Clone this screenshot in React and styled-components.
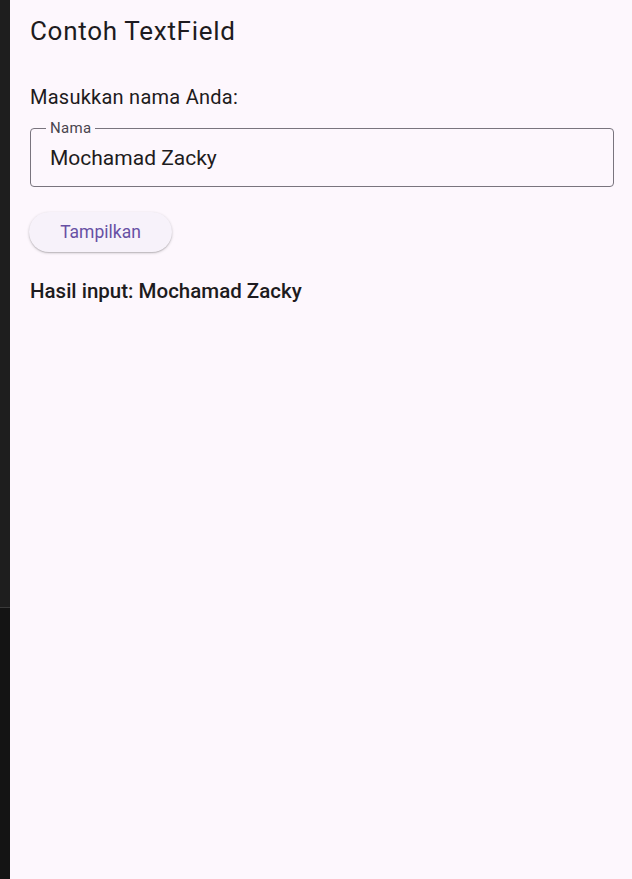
import React, { useState } from 'react';
import styled, { createGlobalStyle } from 'styled-components';

const GlobalStyle = createGlobalStyle`
  html, body {
    margin: 0;
    padding: 0;
    height: 100%;
    background: #141414;
  }
  #root {
    height: 100%;
  }
  * {
    box-sizing: border-box;
  }
`;

const Screen = styled.div`
  display: flex;
  height: 879px;
  width: 632px;
  overflow: hidden;
  font-family: Roboto, "Noto Sans", sans-serif;
`;

const SideStrip = styled.div`
  width: 10px;
  display: flex;
  flex-direction: column;
`;

const StripPart = styled.div`
  height: ${(p) => p.h || 'auto'};
  flex: ${(p) => (p.grow ? 1 : 'none')};
  background: ${(p) => p.bg};
  border-bottom: ${(p) => (p.line ? '1px solid #3a3a3a' : 'none')};
`;

const Surface = styled.div`
  flex: 1;
  background: #fdf7fd;
  display: flex;
  flex-direction: column;
`;

const AppBar = styled.header`
  height: 62px;
  display: flex;
  align-items: center;
  padding: 0 20px;
`;

const Title = styled.h1`
  margin: 0;
  font-size: 26px;
  font-weight: 400;
  color: #1d1b20;
  letter-spacing: 0.7px;
`;

const Body = styled.main`
  padding: 23px 18px 0 20px;
  display: flex;
  flex-direction: column;
`;

const Prompt = styled.p`
  margin: 0 0 19px;
  font-size: 20px;
  letter-spacing: 0.25px;
  color: #1d1b20;
  line-height: 24px;
`;

const Field = styled.div`
  position: relative;
  height: 59px;
  border: 1px solid #79747e;
  border-radius: 4px;
  display: flex;
  align-items: center;
  padding: 0 19px;
`;

const FloatingLabel = styled.label`
  position: absolute;
  top: -9px;
  left: 15px;
  padding: 0 4px;
  background: #fdf7fd;
  font-size: 15px;
  letter-spacing: 0.3px;
  color: #49454f;
  line-height: 16px;
`;

const Input = styled.input`
  border: none;
  outline: none;
  background: transparent;
  width: 100%;
  padding: 0;
  font-family: inherit;
  font-size: 21px;
  color: #1d1b20;
`;

const Button = styled.button`
  align-self: flex-start;
  margin-top: 25px;
  margin-left: -1px;
  height: 40px;
  width: 143px;
  padding: 0;
  border: none;
  border-radius: 20px;
  background: #f7f2fa;
  color: #6750a4;
  font-family: inherit;
  font-size: 17.5px;
  cursor: pointer;
  box-shadow: 0 1px 3px rgba(0, 0, 0, 0.2), 0 1px 1px rgba(0, 0, 0, 0.12);
`;

const Result = styled.p`
  margin: 27px 0 0;
  font-size: 20.5px;
  font-weight: 500;
  color: #1d1b20;
`;

export default function App() {
  const [name, setName] = useState('Mochamad Zacky');
  const [result, setResult] = useState('Mochamad Zacky');

  return (
    <>
      <GlobalStyle />
      <Screen>
        <SideStrip>
          <StripPart h="608px" bg="#1e1e1e" line />
          <StripPart grow bg="#141414" />
        </SideStrip>
        <Surface>
          <AppBar>
            <Title>Contoh TextField</Title>
          </AppBar>
          <Body>
            <Prompt>Masukkan nama Anda:</Prompt>
            <Field>
              <FloatingLabel htmlFor="nama">Nama</FloatingLabel>
              <Input id="nama" value={name} onChange={(e) => setName(e.target.value)} />
            </Field>
            <Button onClick={() => setResult(name)}>Tampilkan</Button>
            <Result>Hasil input: {result}</Result>
          </Body>
        </Surface>
      </Screen>
    </>
  );
}
